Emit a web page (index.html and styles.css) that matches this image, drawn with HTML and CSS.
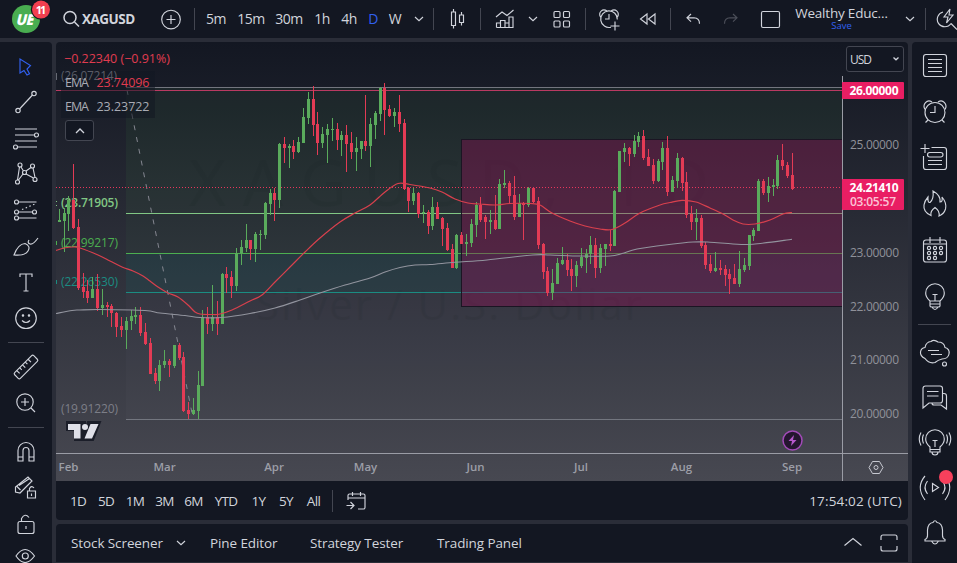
FILE: index.html
```html
<!DOCTYPE html>
<html lang="en">
<head>
<meta charset="utf-8">
<title>XAGUSD</title>
<link rel="stylesheet" href="styles.css">
</head>
<body>
<div class="app">
<header class="topbar">
  <div class="brand"><svg viewBox="0 0 60 38"><circle cx="26" cy="19" r="14" fill="#49ad50"/><text class="mono" transform="translate(15.500 24.500) skewX(-14)" textLength="17" lengthAdjust="spacingAndGlyphs">UE</text><circle cx="41" cy="9.6" r="10.2" fill="#131722"/><circle cx="41" cy="9.6" r="9" fill="#f23f4f"/><text class="count" x="35.8" y="13.6" textLength="10">11</text></svg></div>
  <div class="symbol"><svg viewBox="0 0 18 18"><circle cx="7" cy="7.500" r="6"/><path d="M11.500 12l4.500 4.500"/></svg><b>XAGUSD</b></div>
  <div><svg class="i" viewBox="-16 -16 32 32"><circle cx="0" cy=".5" r="9.3"/><path d="M-4.5.5h9M0-4v9"/></svg></div>
  <i class="vs"></i>
  <span>5m</span><span>15m</span><span>30m</span><span>1h</span><span>4h</span><span class="on">D</span><span>W</span>
  <div><svg class="i" viewBox="-16 -16 32 32"><path d="M-4-2l4 3.7L4-2"/></svg></div>
  <i class="vs"></i>
  <div><svg class="i" viewBox="-16 -16 32 32"><path d="M-5.5-7h4V6.500h-4zM-3.500-10v3M-3.500 6.500v3M2.500-4h4v7.500h-4zM4.500-7v3M4.500 3.500v3"/></svg></div>
  <i class="vs"></i>
  <div><svg class="i" viewBox="-16 -16 32 32"><path d="M-9-2l6-5L2-3.500l6.500-5.500M-8.500 8.500v-4.500h4v4.500M-4.500 4v-2.500h4.500v7M0 4h4v4.500M4 4v-6h4V8.500h-16.500"/></svg></div>
  <div><svg class="i" viewBox="-16 -16 32 32"><path d="M-4-2l4 3.700L4-2"/></svg></div>
  <div><svg class="i" viewBox="-16 -16 32 32"><rect x="-7" y="-7.500" width="6" height="6" rx="1"/><rect x="2.500" y="-7.500" width="6" height="6" rx="1"/><rect x="-7" y="2" width="6" height="6" rx="1"/><rect x="2.500" y="2" width="6" height="6" rx="1"/></svg></div>
  <i class="vs"></i>
  <div><svg class="i" viewBox="-16 -16 32 32"><path d="M2 8.200A8.300 8.300 0 1 1 8.300.5M0-5v5h-4M6 2.500v9M1.500 7h9M-8.500-2c-2.500-4.500 2-9 6.500-6M8.500-2c2.500-4.500-2-9-6.500-6"/></svg></div>
  <div><svg class="i" viewBox="-16 -16 32 32"><path d="M-1-5v10l-6.500-5zM7-5v10L.5 0z"/></svg></div>
  <i class="vs"></i>
  <div><svg class="i" viewBox="-16 -16 32 32"><path d="M-2-5l-4 3.800 4 3.800M-6-1.200h7q5.500.2 5.500 6"/></svg></div>
  <div class="dim"><svg class="i" viewBox="-16 -16 32 32"><path d="M2-5l4 3.800-4 3.800M6-1.200h-7q-5.500.2-5.500 6"/></svg></div>
  <div><svg class="i" viewBox="-16 -16 32 32"><rect x="-8.500" y="-7.500" width="18" height="16" rx="1.500"/></svg></div>
  <div class="layout"><span>Wealthy Educ…</span><small>Save</small></div>
  <div><svg class="i" viewBox="-16 -16 32 32"><path d="M-4-2l4 3.700L4-2"/></svg></div>
  <i class="vs"></i>
  <div class="quick"><svg class="i" viewBox="-16 -16 32 32"><path d="M-3-7A7.500 7.500 0 1 0 5 4.500M5 4.500l6 6M4-10l-6 8h4l-1.500 6 6.500-8H3z"/></svg></div>
</header>
<aside class="tools">
  <div class="on"><svg class="i" viewBox="-16 -16 32 32"><path d="M-6-8v14l4-2.500 3 4.500 2.500-1.300-2.500-4.700L4.500-1.500z"/></svg></div>
  <div><svg class="i" viewBox="-16 -16 32 32"><circle cx="8" cy="-8.500" r="2.200"/><circle cx="-8" cy="8.500" r="2.200"/><path d="M6.500-7l-13 14"/></svg></div>
  <div><svg class="i" viewBox="-16 -16 32 32"><path d="M-11-9h22M-11-3H8M-11 3h22M-8 9h19"/><circle cx="10.500" cy="-3" r="2"/><circle cx="-10.500" cy="9" r="2"/></svg></div>
  <div><svg class="i" viewBox="-16 -16 32 32"><circle cx="-6" cy="-8" r="2"/><circle cx="6.500" cy="-7" r="2"/><circle cx="-1.500" cy="-.5" r="2"/><circle cx="-8.500" cy="9" r="2"/><circle cx="9" cy="6.500" r="2"/><path d="M-6.500-6l-2 13M-5-6l2.500 4M5-5.500L0-2M0 1l7.500 4M7-5l2 9.500M-3 1l-4.500 6"/></svg></div>
  <div><svg class="i" viewBox="-16 -16 32 32"><circle cx="-9.500" cy="-8" r="2"/><circle cx="-9.500" cy="2" r="2"/><circle cx="8.500" cy="2" r="2"/><circle cx="-9.500" cy="8" r="2"/><path d="M-7.500-8h18M-7.500 2h14M-7.500 8h18"/><path stroke-dasharray="1.500 2.500" d="M-4-.5L9-6"/></svg></div>
  <div><svg class="i" viewBox="-16 -16 32 32"><path d="M-12 8Q-8-3-1-3.500Q5-1 2 4Q-1 9-12 8zM3-7Q1-4 4-3Q7-2 12-9"/></svg></div>
  <div><svg class="i" viewBox="-16 -16 32 32"><path d="M-6-6v-3H6v3M0-9V8M-2.500 8h5"/></svg></div>
  <div><svg class="i" viewBox="-16 -16 32 32"><circle cx="0" cy="-.8" r="10.300"/><path d="M-4 1.500q4 4 8 0"/><circle cx="-3" cy="-3.500" r=".7" fill="currentColor"/><circle cx="3" cy="-3.500" r=".7" fill="currentColor"/></svg></div>
  <hr>
  <div><svg class="i" viewBox="-16 -16 32 32"><g transform="rotate(-45)"><rect x="-13.500" y="-4" width="27" height="8" rx="1.500"/><path d="M-9-4v4M-5-4v3M-1-4v4M3-4v3M7-4v4"/></g></svg></div>
  <div><svg class="i" viewBox="-16 -16 32 32"><circle cx="-1" cy="-1" r="8.200"/><path d="M5 5l4 4M-5-1h8M-1-5v8"/></svg></div>
  <hr>
  <div><svg class="i" viewBox="-16 -16 32 32"><path d="M-8 9V-1.500a8 8 0 0 1 16 0V9H3V-1.500a3 3 0 0 0-6 0V9zM-8 5h5M3 5h5"/></svg></div>
  <div><svg class="i" viewBox="-16 -16 32 32"><path d="M-10.500 4v-5L2-11l4 4L-6 5zM-9-1.500l3.500 3.500M-7-2.500L3.500-9.500"/><path d="M1.500 3h8v7h-8zM3.500 3v-2.500q2-3.500 4.500-.5M5.500 5.500v2.500"/></svg></div>
  <div><svg class="i" viewBox="-16 -16 32 32"><rect x="-8" y="-2.500" width="16" height="12" rx="2"/><path d="M-4.500-2.500v-3q3.500-6 7.500-1M0 2v3"/></svg></div>
  <div><svg class="i" viewBox="-16 -16 32 32"><path d="M-10 0Q-1-13 8.500 0Q-1 13-10 0z"/><circle cx="-.7" cy="0" r="3"/></svg></div>
</aside>
<main class="chart">
  <svg id="plot" viewBox="56 42 852 439">
    <defs>
      <linearGradient id="bg" x1="0" y1="0" x2="0" y2="1"><stop offset="0" stop-color="#131722"/><stop offset="1" stop-color="#474851"/></linearGradient>
    </defs>
    <rect x="56" y="42" width="852" height="439" fill="url(#bg)"/>
    <text class="wm" x="449" y="206" font-size="64" textLength="520">XAGUSD, 1D</text>
    <text class="wm" x="449" y="320" font-size="42" textLength="386">Silver / U.S. Dollar</text>
    <rect x="126" y="88" width="716" height="125" fill="#4caf50" opacity=".075"/>
    <rect x="126" y="213" width="716" height="40" fill="#4caf50" opacity=".05"/>
    <rect x="126" y="253" width="716" height="39" fill="#009688" opacity=".1"/>
    <rect x="126" y="292" width="716" height="127" fill="#787b86" opacity=".06"/>
    <g class="lv">
      <path stroke="#73767f" d="M126 87.500H842M126 419.500H842"/>
      <path stroke="#81c784" d="M126 213.500H842"/>
      <path stroke="#4caf50" d="M126 253.500H842"/>
      <path stroke="#1b8c82" d="M126 292.500H842"/>
      <path stroke="#858791" stroke-dasharray="5 7" d="M127 90L193 418"/>
    </g>
    <rect x="461.500" y="139.500" width="381" height="167" fill="#9c0a57" fill-opacity=".34" stroke="#1b1523"/>
    <path stroke="#b93a62" d="M56 90.500H842"/>
    <path stroke="#e8365c" stroke-dasharray="1 2" d="M56 187.500H842"/>
    <g class="fib">
      <text x="61" y="207" fill="#81c784" class="bold" textLength="57">(23.71905)</text>
      <text x="61" y="247" fill="#4caf50" textLength="57">(22.99217)</text>
      <text x="61" y="286" fill="#1b8c82" textLength="57">(22.26530)</text>
      <text x="61" y="413" fill="#7c7e87" textLength="57">(19.91220)</text>
      <path stroke="#81c784" d="M56.500 201v1M56.500 205v1"/><path stroke="#4caf50" d="M56.500 241v4"/><path stroke="#1b8c82" d="M56.500 280v4"/><path stroke="#666973" d="M56.500 73v7"/>
    </g>
    <g id="candles"></g>
    <path id="slow" fill="none" stroke="#92949e" stroke-width="1.100"/>
    <path id="fast" fill="none" stroke="#d8404d" stroke-width="1.200"/>
    <path stroke="#9a9ca5" d="M842.500 76V481M56 453.500H908"/>
    <g class="legend">
      <rect x="61" y="71" width="94" height="47" fill="#131722" opacity=".55"/>
      <text class="plain" x="61" y="80" fill="#5a5d67" textLength="56">(26.07214)</text>
      <text x="64" y="63" fill="#e03c50" textLength="106">−0.22340 (−0.91%)</text>
      <text x="65" y="87" fill="#a9abb4" textLength="24">EMA</text>
      <text x="96.500" y="87" fill="#e03c50" textLength="53">23.74096</text>
      <text x="65" y="111" fill="#a9abb4" textLength="24">EMA</text>
      <text x="96.500" y="111" fill="#a9abb4" textLength="53">23.23722</text>
    </g>
    <path d="M67 422h18v3h2l1-3h12l-7 18h-7l1-3h-3v3h-9v-10h-8z" fill="#1b1e29" stroke="#1b1e29" stroke-width="2"/>
    <path d="M68 424h12.500v14.500h-6.500v-8.500h-6zM90.500 424h8l-6.500 14.500h-7.500z" fill="#dfe0e8"/><circle cx="85" cy="427" r="3" fill="#dfe0e8"/>
    <circle cx="792.500" cy="440.500" r="9.500" fill="#24162f" stroke="#a24bb8" stroke-width="1.500"/>
    <path d="M794 435l-5.500 6h3.500l-1 5 5.500-6h-3.500z" fill="#b658cc"/>
    <g class="ticks">
      <text x="850" y="149" textLength="49">25.00000</text>
      <text x="850" y="257" textLength="49">23.00000</text>
      <text x="850" y="311" textLength="49">22.00000</text>
      <text x="850" y="364" textLength="49">21.00000</text>
      <text x="850" y="418" textLength="49">20.00000</text>
    </g>
    <g class="tags">
      <rect x="842" y="82" width="62" height="17" rx="1"/><text x="849.500" y="95" textLength="49">26.00000</text>
      <rect x="842" y="179" width="62" height="31" rx="1"/><text x="849.500" y="192" textLength="49">24.21410</text><text x="850" y="206" textLength="46" class="soft">03:05:57</text>
    </g>
    <g class="months">
      <text x="68.500" y="471">Feb</text><text x="164.500" y="471">Mar</text><text x="274" y="471">Apr</text><text x="365.500" y="471">May</text><text x="475.500" y="471">Jun</text><text x="581" y="471">Jul</text><text x="681.500" y="471">Aug</text><text x="792" y="471">Sep</text>
    </g>
    <path d="M872.500 461.500h7l3.500 6-3.500 6h-7l-3.500-6z" fill="none" stroke="#c6c8d0"/><circle cx="876" cy="467.500" r="2" fill="none" stroke="#c6c8d0"/>
  </svg>
  <button class="fold"><svg viewBox="0 0 10 6"><path d="M1 5l4-4 4 4"/></svg></button>
  <button class="cur"><span>USD</span><svg viewBox="0 0 8 6"><path d="M1.500 1.500L4 3.800l2.500-2.300"/></svg></button>
</main>
<section class="ranges">
  <nav><span>1D</span><span>5D</span><span>1M</span><span>3M</span><span>6M</span><span>YTD</span><span>1Y</span><span>5Y</span><span>All</span></nav>
  <i class="vs"></i>
  <svg class="i" viewBox="-16 -16 32 32"><path d="M-8-1v-4.500q0-1.500 1.500-1.500h14q1.500 0 1.500 1.500v12q0 1.500-1.500 1.500H2M-8-3h17M-3.500-9v4M4.500-9v4M-9.500 4.500h7M-5.500 1l3.500 3.500L-5.500 8"/></svg>
  <time>17:54:02 (UTC)</time>
</section>
<footer class="panels">
  <span class="p1">Stock Screener</span><svg class="i chev" viewBox="-16 -16 32 32"><path d="M-4-2l4 3.700L4-2"/></svg><span class="p2">Pine Editor</span><span class="p3">Strategy Tester</span><span class="p4">Trading Panel</span>
  <svg class="i up" viewBox="-16 -16 32 32"><path d="M-8.500 2.500l8.500-7 8.500 7"/></svg>
  <svg class="i full" viewBox="-16 -16 32 32"><path d="M-8-3v-3q0-2 2-2h2.500M3-8h3q2 0 2 2v3M8 3v3q0 2-2 2h-3M-3.500 8h-2.500q-2 0-2-2v-3M-3.500-8h7M-3.500 8h7"/></svg>
</footer>
<aside class="side">
  <div><svg class="i" viewBox="-16 -16 32 32"><rect x="-11.500" y="-10.500" width="23" height="22" rx="2.500"/><path d="M-7-5.500H7M-7-1.500H7M-7 2.500H7M-7 6.500H7"/></svg></div>
  <div><svg class="i" viewBox="-16 -16 32 32"><circle cx="0" cy="1.500" r="10"/><path d="M0-5v6.500h-5M-7 9l-2.500 2.500M7 9l2.500 2.500M-10-1.500c-3-5 2-11 7-7.500M10-1.500c3-5-2-11-7-7.500"/></svg></div>
  <div><svg class="i" viewBox="-16 -16 32 32"><path d="M-3.500-10.500h12.500q2.500 0 2.500 2.500V9q0 2.500-2.500 2.500H-9q-2.500 0-2.500-2.500V-2M-10-14v9M-14.500-9.500h9M-7 2.500H7M-7 6.500H7"/><rect x="-7.500" y="-5.500" width="15.500" height="4.500" rx="2.200"/></svg></div>
  <div><svg class="i" viewBox="-16 -16 32 32"><path d="M-4 11.500Q-12 8-11 1Q-10.500-3-7-7Q-7.500-1-5-1.500Q-1-5-2-13Q6-8.500 5-2Q8-2 7-7Q12-1 10.500 5Q9 10 4 12Q5 7 0 3.500Q-5 7-4 11.500z"/></svg></div>
  <div><svg class="i" viewBox="-16 -16 32 32"><rect x="-11.500" y="-10" width="23" height="22" rx="2.500"/><path d="M-11-6h22M-5-13v6M5-13v6"/><circle cx="-6" cy="-2" r="1.600"/><circle cx="0" cy="-2" r="1.600"/><circle cx="6" cy="-2" r="1.600"/><circle cx="-6" cy="3" r="1.600"/><circle cx="0" cy="3" r="1.600"/><circle cx="6" cy="3" r="1.600"/><circle cx="-6" cy="8" r="1.600"/><circle cx="0" cy="8" r="1.600"/></svg></div>
  <div><svg class="i" viewBox="-16 -16 32 32"><path d="M-5 5Q-9.500 1-9.300-3a9.300 9.300 0 0 1 18.600 0Q9.500 1 5 5v5q0 1-2 1h-6q-2 0-2-1zM-5 5H5M-5 8H5M-2.500-1.500h5M0-1.500V5M-3 11q3 5 6 0"/></svg></div>
  <hr>
  <div><svg class="i" viewBox="-16 -16 32 32"><path d="M-10 5.500Q-15 3-14.500-1Q-14-5-10-5.500Q-9-11-4-11.500Q-1-14 3-11Q9-11 10-5.500Q15-4 14 1Q13 6 7 6Q3 7 0 9.500Q-6 11-10 5.500zM-7-2.500H4M-4 1.500H7"/><circle cx="9.500" cy="11" r="2"/></svg></div>
  <div><svg class="i" viewBox="-16 -16 32 32"><path d="M-12 10v-19.500q0-2.500 2.500-2.500H5q2.500 0 2.500 2.500V2.500Q7.500 5 5 5H-6zM-8-6.500H3.500M-8-2H3.500M7.500-4.500H9q2.500 0 2.500 2.500v13L6 7H-1q-2 0-2-2"/></svg></div>
  <div><svg class="i" viewBox="-16 -16 32 32"><path d="M-5 4Q-9.500 0-9.300-4a9.300 9.300 0 0 1 18.600 0Q9.500 0 5 4v5H-5zM-5 6.500H5M-2.500-2.500h5M0-2.500V4M-3 9q0 3 3 3t3-3M-11.500-8.500q-2 4.500 0 9M-14-10.500q-3.500 6.500 0 13M11.500-8.500q2 4.500 0 9M14-10.500q3.500 6.500 0 13"/></svg></div>
  <div class="live"><svg class="i" viewBox="-16 -16 32 32"><path d="M-2.500-4.500l6 4-6 4zM-7.500-7q-5 6.500 0 13M-10-12q-9.500 11 0 24M7.500-7q5 6.500 0 13M10-12q9.500 11 0 24"/></svg></div>
  <div><svg class="i" viewBox="-16 -16 32 32"><path d="M-10 8V6.500q2.500-1 2.500-4V-3Q-7-10-2-10.500Q0-14 2-10.500Q7-10 7.500-3v5.500q0 3 2.500 4V8zM-3.500 8q3.500 6 7 0"/></svg></div>
</aside>
</div>
<script src="chart.js"></script>
</body>
</html>
```
FILE: styles.css
```css
* { box-sizing: border-box; }
body { margin: 0; background: #2a2d38; font-family: "Open Sans", "Noto Sans", sans-serif; font-weight: 500; color: #d1d4dc; overflow: hidden; }
.app { display: grid; width: 957px; height: 563px; grid-template-columns: 52px 852px 45px; grid-template-rows: 38px 439px 39px 47px; column-gap: 4px; }
.i { width: 32px; height: 32px; flex: none; display: block; fill: none; stroke: currentColor; stroke-width: 1.15; overflow: visible; }

.topbar { grid-column: 1 / -1; background: #131722; display: grid; align-items: center; justify-items: center; font-size: 14px; letter-spacing: -.5px; line-height: 18px;
  grid-template-columns: 60px 94px 34px 12px 32px 38px 38px 28px 26px 22px 22px 26px 3px 44px 3px 46px 10px 46px 3px 44px 34px 10px 36px 40px 37px 107px 29px 3px 30px; }
.brand svg { width: 60px; height: 38px; display: block; }
.mono { fill: #fff; font: 800 15px "Open Sans", sans-serif; }
.count { fill: #fff; font: 700 11px "Open Sans", sans-serif; }
.symbol { justify-self: start; display: flex; align-items: center; padding-left: 3px; }
.symbol svg { width: 18px; height: 18px; fill: none; stroke: #d1d4dc; stroke-width: 1.5; }
.symbol b { margin-left: 1px; letter-spacing: -.5px; font-size: 13.5px; }
.vs { width: 1px; height: 22px; background: #434651; }
.on { color: #3161f0; }
.dim { color: #4c4f59; }
.layout { display: flex; flex-direction: column; align-items: center; letter-spacing: -.2px; padding-bottom: 1px; white-space: nowrap; }
.layout span { line-height: 15px; font-size: 13.5px; }
.layout small { font-size: 9.5px; line-height: 10px; letter-spacing: 0; color: #3161f0; }
.quick { color: #d1d4dc; padding-left: 8px; }

.tools, .side { background: #131722; grid-row: 2 / 5; margin-top: 4px; overflow: hidden; display: grid; justify-items: center; align-items: center; align-content: start; }
.tools { grid-column: 1; border-radius: 0 4px 0 0; padding-top: 7px; grid-template-rows: 35px 36px 35px 36px 37px 37px 36px 35px 13px 36px 35px 14px 36px 36px 36px 28px; }
.side { grid-column: 3; border-radius: 4px 0 0 0; grid-template-rows: 46px 46px 47px 46px 46px 46px 11px 45px 45px 46px 44px 46px; }
.tools hr { width: 36px; margin: 0; border: 0; border-top: 1px solid #434651; }
.side hr { width: 33px; margin: 0; border: 0; border-top: 1px solid #434651; }
.live { position: relative; }
.live::after { content: ""; position: absolute; right: -2px; top: -2px; width: 14px; height: 14px; border-radius: 50%; background: #f7405c; }

.chart { grid-column: 2; grid-row: 2; position: relative; margin-top: 4px; height: 439px; overflow: hidden; border-radius: 4px 4px 0 0; z-index: 1; }
#plot { width: 852px; height: 439px; display: block; font-size: 12px; }
.lv path { fill: none; }
.bold { font-weight: 600; }
.wm { fill: #0d101a; opacity: .08; text-anchor: middle; }
.legend text { font-size: 12.5px; }
.legend .plain { font-size: 12px; }
.ticks { fill: #8f9199; }
.tags rect { fill: #e91e63; }
.tags text { fill: #fff; font-weight: 700; }
.tags .soft { fill: #fbc4d6; font-weight: 600; }
.months { fill: #9c9ea7; font-weight: 600; font-size: 11.5px; text-anchor: middle; }
button { font: inherit; color: inherit; background: #131722; border: 1px solid #434651; border-radius: 3px; padding: 0; display: flex; align-items: center; }
button svg { fill: none; stroke: #d1d4dc; stroke-width: 1.3; }
.fold { position: absolute; left: 9px; top: 78px; width: 29px; height: 21px; justify-content: center; }
.fold svg { width: 10px; height: 6px; }
.cur { position: absolute; left: 790px; top: 4px; width: 58px; height: 26px; padding: 0 3px; justify-content: space-between; font-size: 12px; letter-spacing: -1px; }
.cur svg { width: 8px; height: 6px; }

.ranges { grid-column: 2; grid-row: 3; margin-top: 4px; height: 39px; background: #131722; border-radius: 0 0 4px 4px; display: flex; align-items: center; font-size: 13.500px; letter-spacing: -.7px; }
.ranges nav { display: grid; grid-template-columns: 28px 28px 30px 29px 29px 36px 29px 26px 29px; justify-items: center; margin-left: 8px; }
.ranges .vs { margin: 0 7px 0 4px; }
.ranges time { margin-left: auto; margin-right: 6px; letter-spacing: .15px; }
.panels { grid-column: 2; grid-row: 4; margin-top: 8px; height: 38px; background: #131722; border-radius: 4px 4px 0 0; display: flex; align-items: center; font-size: 13.500px; letter-spacing: -.1px; white-space: nowrap; }
.p1 { width: 109px; padding-left: 15px; }
.chev { margin-right: 13px; }
.p2 { width: 100px; }
.p3 { width: 127px; }
.up { margin-left: auto; margin-right: 4px; }
.full { margin-right: 3px; }
```
FILE: chart.js
```js
// x, high, low, body top, body bottom, rising
const bars = `59.5 209 222 220 222 1|64.5 208 252 213 221 1|68.5 196 231 200 214 1|73.5 164 229 200 228 0|78.5 219 290 227 288 0|83.5 273 298 287 292 0|87.5 280 303 291 298 0|92.5 277 298 289 298 1|97.5 274 311 289 308 0|102.5 289 315 305 308 1|107.5 302 317 305 307 0|111.5 304 327 306 313 0|116.5 312 337 313 327 0|121.5 317 337 326 330 0|126.5 317 349 321 330 1|131.5 310 330 316 321 1|135.5 307 324 315 317 1|140.5 307 336 315 333 0|145.5 323 345 332 344 0|150.5 338 374 343 374 0|155.5 368 384 373 381 0|159.5 360 391 365 381 1|164.5 350 368 361 365 1|169.5 359 377 361 365 0|174.5 345 368 345 366 1|179.5 343 360 345 358 0|183.5 352 412 357 411 0|188.5 402 419 410 414 0|193.5 398 415 410 414 1|198.5 371 419 385 411 1|202.5 310 386 317 386 1|207.5 307 334 317 324 0|212.5 285 331 317 324 1|217.5 301 335 317 324 0|222.5 273 324 274 324 1|226.5 267 293 274 278 0|231.5 271 298 277 286 0|236.5 248 291 253 286 1|241.5 240 265 247 253 1|246.5 224 252 240 248 1|250.5 240 260 240 249 0|255.5 232 262 234 249 1|260.5 230 250 234 235 1|265.5 202 239 203 235 1|270.5 189 215 193 204 1|274.5 188 221 193 200 0|279.5 143 208 144 200 1|284.5 137 163 144 148 0|289.5 144 168 146 148 1|293.5 140 159 146 152 0|298.5 137 153 142 152 1|303.5 108 143 117 143 1|308.5 92 124 99 118 1|313.5 86 136 99 125 0|317.5 112 155 124 143 0|322.5 127 148 134 143 1|327.5 124 163 129 135 1|332.5 118 141 129 130 1|337.5 123 150 129 140 0|341.5 131 156 135 140 1|346.5 125 172 135 144 0|351.5 132 159 143 152 0|356.5 137 171 148 152 1|361.5 141 159 141 149 1|365.5 95 151 141 146 0|370.5 118 167 124 146 1|375.5 111 139 113 125 1|380.5 87 121 88 114 1|384.5 83 135 88 110 0|389.5 105 117 109 116 0|394.5 108 127 112 116 1|399.5 95 132 112 124 0|404.5 119 190 123 189 0|408.5 187 212 188 201 0|413.5 188 205 193 201 1|418.5 192 218 193 214 0|423.5 205 223 212 213 1|428.5 210 234 212 226 0|432.5 197 230 207 226 1|437.5 202 219 207 219 0|442.5 217 246 218 229 0|447.5 223 251 228 250 0|452.5 244 268 249 268 0|456.5 234 269 235 268 1|461.5 232 244 235 244 0|466.5 234 256 242 244 1|471.5 219 247 224 243 1|476.5 202 237 205 225 1|480.5 197 222 205 220 0|485.5 215 239 217 222 0|490.5 210 234 220 222 1|495.5 195 230 220 229 0|499.5 179 229 184 229 1|504.5 170 188 183 185 1|509.5 181 204 183 196 0|514.5 176 220 195 217 0|519.5 194 217 203 217 1|523.5 202 240 203 205 0|528.5 187 207 188 205 1|533.5 188 203 188 202 0|538.5 197 249 201 245 0|543.5 243 279 244 272 0|547.5 267 296 271 293 0|552.5 269 300 283 293 1|557.5 258 284 263 284 1|562.5 247 265 260 264 1|567.5 254 276 260 270 0|571.5 259 291 269 276 0|576.5 261 287 265 276 1|581.5 248 268 257 266 1|586.5 249 273 254 258 1|590.5 236 264 245 254 1|595.5 238 278 245 268 0|600.5 244 273 248 268 1|605.5 244 266 244 249 1|610.5 230 251 244 246 0|614.5 190 246 191 246 1|619.5 151 192 151 192 1|624.5 143 162 148 152 1|629.5 147 166 148 154 0|634.5 135 157 141 154 1|638.5 132 147 136 142 1|643.5 130 160 136 158 0|648.5 149 166 157 166 0|653.5 159 184 165 181 0|658.5 159 182 161 181 1|662.5 142 170 148 162 1|667.5 136 196 148 192 0|672.5 176 192 180 192 1|677.5 153 188 158 181 1|682.5 157 191 158 183 0|686.5 172 218 182 215 0|691.5 206 230 214 222 0|696.5 209 240 218 222 1|701.5 215 248 218 246 0|705.5 242 269 245 265 0|710.5 255 273 264 271 0|715.5 252 272 268 271 1|720.5 260 275 268 270 0|725.5 265 286 269 275 0|729.5 269 294 274 279 0|734.5 264 284 278 284 0|739.5 251 287 269 284 1|744.5 258 272 265 270 1|749.5 235 270 235 266 1|753.5 228 241 230 236 1|758.5 179 231 181 231 1|763.5 179 195 181 193 0|768.5 177 202 186 193 1|773.5 179 196 185 187 1|777.5 155 189 160 186 1|782.5 144 170 160 166 0|787.5 162 178 165 176 0|792.5 153 190 175 189 0`;
const fast = '56 250.5 64 248 73 247 80 248 98 255 110 261 122 267 133 271 143 276 150 281 158 287 168 293 178 297 188 305 195 312 200 314 212 314.5 220 314 232 310 250 301 262 295 275 282 290 267 305 252 320 238 340 222 355 213 370 205 385 192 398 183.5 410 184.5 430 188 442 192 455 199 468 203 480 204 495 205 510 203.5 530 203.5 540 205 552 213 570 221 585 226 600 229 612 229.5 625 223 640 213 660 205 670 202.5 682 200.3 696 202 710 208 723 214 733 220 743 224 755 224 770 220 783 214 792 212.5';
const slow = '56 313.5 72 310.5 80 310 100 309.5 145 310.5 160 313 185 315.5 200 317.5 222 317.5 250 313.5 275 308 300 300 320 293 345 285 370 278 385 272 400 267.5 415 265 430 264.5 455 262.3 487 260 533 255 550 255 580 256 610 256 622 253.5 637 249 667 244.7 693 242 710 242.2 733 244 753 244.2 792 239.3';

// Catmull-Rom through the points
function curve(text) {
  const n = text.split(' ').map(Number), p = [];
  for (let i = 0; i < n.length; i += 2) p.push([n[i], n[i + 1]]);
  let d = 'M' + p[0];
  for (let i = 0; i < p.length - 1; i++) {
    const a = p[i - 1] || p[i], b = p[i], c = p[i + 1], e = p[i + 2] || c;
    d += `C${b[0] + (c[0] - a[0]) / 6} ${b[1] + (c[1] - a[1]) / 6} ${c[0] - (e[0] - b[0]) / 6} ${c[1] - (e[1] - b[1]) / 6} ${c[0]} ${c[1]}`;
  }
  return d;
}
document.getElementById('fast').setAttribute('d', curve(fast));
document.getElementById('slow').setAttribute('d', curve(slow));
document.getElementById('candles').innerHTML = bars.split('|').map(row => {
  const [x, hi, lo, top, bottom, up] = row.split(' ').map(Number);
  const color = up ? '#5aab5c' : '#e33b55';
  return `<rect x="${x - .5}" y="${hi}" width="1" height="${lo - hi}" fill="${color}"/><rect x="${x - 1.5}" y="${top}" width="3" height="${bottom - top}" fill="${color}"/>`;
}).join('');
```
